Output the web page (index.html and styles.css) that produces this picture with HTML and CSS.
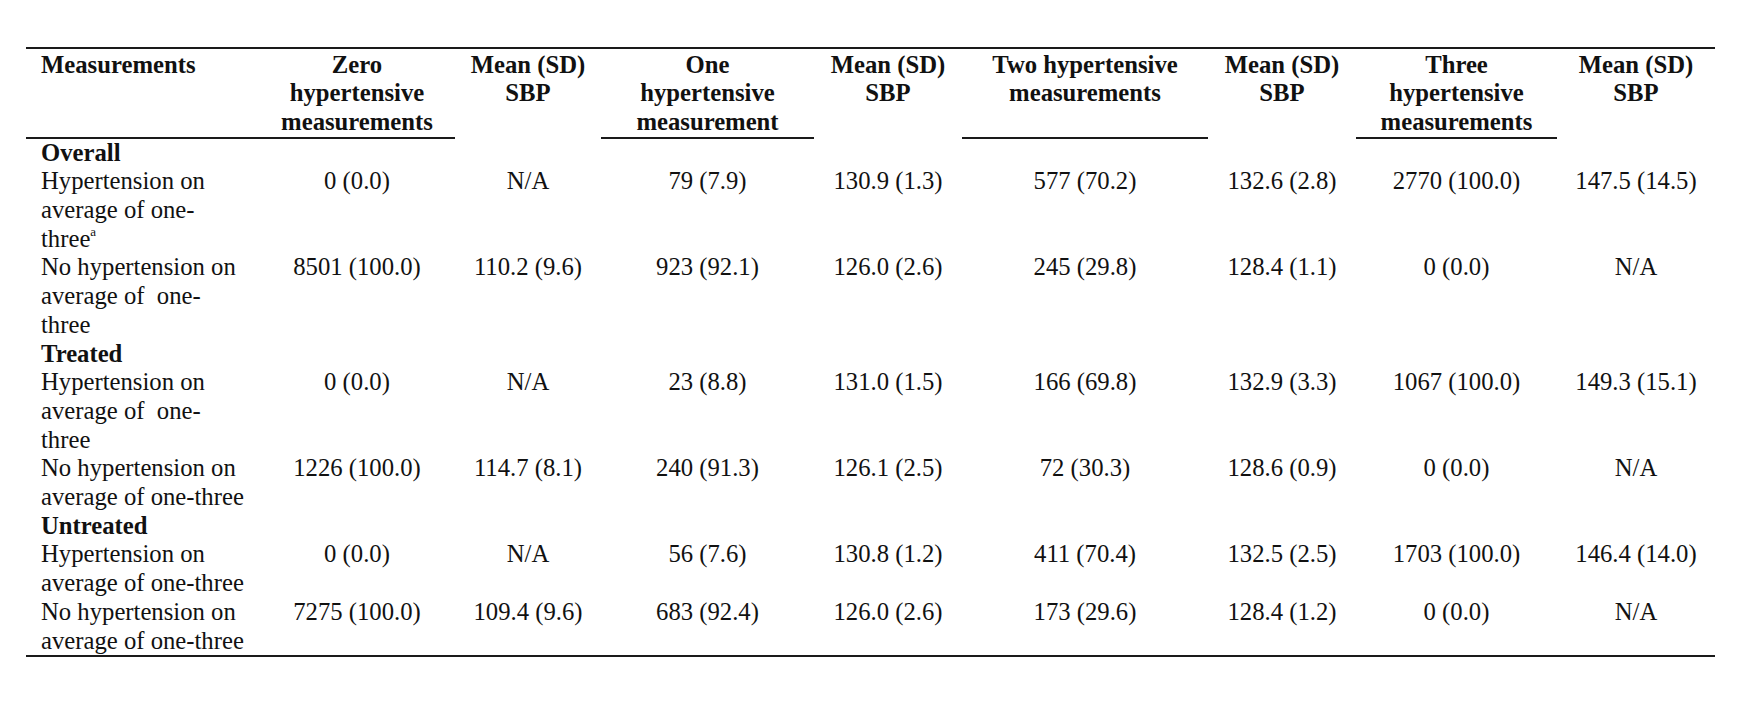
FILE: index.html
```html
<!DOCTYPE html>
<html lang="en">
<head>
<meta charset="utf-8">
<title>Hypertensive measurements</title>
<link rel="stylesheet" href="styles.css">
</head>
<body>
<table class="data">
  <colgroup>
    <col class="c-label">
    <col class="c-zero">
    <col class="c-mean1">
    <col class="c-one">
    <col class="c-mean2">
    <col class="c-two">
    <col class="c-mean3">
    <col class="c-three">
    <col class="c-mean4">
  </colgroup>
  <thead>
    <tr>
      <th class="h-label ul">Measurements</th>
      <th class="ul">Zero<br>hypertensive<br>measurements</th>
      <th>Mean (SD)<br>SBP</th>
      <th class="ul">One<br>hypertensive<br>measurement</th>
      <th>Mean (SD)<br>SBP</th>
      <th class="ul">Two hypertensive<br>measurements</th>
      <th>Mean (SD)<br>SBP</th>
      <th class="ul">Three<br>hypertensive<br>measurements</th>
      <th>Mean (SD)<br>SBP</th>
    </tr>
  </thead>
  <tbody>
    <tr class="section"><td colspan="9" class="label">Overall</td></tr>
    <tr>
      <td class="label">Hypertension on<br>average of one-<br>three<sup class="fn">a</sup></td>
      <td>0 (0.0)</td><td>N/A</td><td>79 (7.9)</td><td>130.9 (1.3)</td><td>577 (70.2)</td><td>132.6 (2.8)</td><td>2770 (100.0)</td><td>147.5 (14.5)</td>
    </tr>
    <tr>
      <td class="label">No hypertension on<br>average of&nbsp; one-<br>three</td>
      <td>8501 (100.0)</td><td>110.2 (9.6)</td><td>923 (92.1)</td><td>126.0 (2.6)</td><td>245 (29.8)</td><td>128.4 (1.1)</td><td>0 (0.0)</td><td>N/A</td>
    </tr>
    <tr class="section"><td colspan="9" class="label">Treated</td></tr>
    <tr>
      <td class="label">Hypertension on<br>average of&nbsp; one-<br>three</td>
      <td>0 (0.0)</td><td>N/A</td><td>23 (8.8)</td><td>131.0 (1.5)</td><td>166 (69.8)</td><td>132.9 (3.3)</td><td>1067 (100.0)</td><td>149.3 (15.1)</td>
    </tr>
    <tr>
      <td class="label">No hypertension on<br>average of one-three</td>
      <td>1226 (100.0)</td><td>114.7 (8.1)</td><td>240 (91.3)</td><td>126.1 (2.5)</td><td>72 (30.3)</td><td>128.6 (0.9)</td><td>0 (0.0)</td><td>N/A</td>
    </tr>
    <tr class="section"><td colspan="9" class="label">Untreated</td></tr>
    <tr>
      <td class="label">Hypertension on<br>average of one-three</td>
      <td>0 (0.0)</td><td>N/A</td><td>56 (7.6)</td><td>130.8 (1.2)</td><td>411 (70.4)</td><td>132.5 (2.5)</td><td>1703 (100.0)</td><td>146.4 (14.0)</td>
    </tr>
    <tr class="last">
      <td class="label">No hypertension on<br>average of one-three</td>
      <td>7275 (100.0)</td><td>109.4 (9.6)</td><td>683 (92.4)</td><td>126.0 (2.6)</td><td>173 (29.6)</td><td>128.4 (1.2)</td><td>0 (0.0)</td><td>N/A</td>
    </tr>
  </tbody>
</table>
</body>
</html>
```

FILE: styles.css
```css
html, body {
  margin: 0;
  padding: 0;
  background: #ffffff;
}

body {
  font-family: "Liberation Serif", "Times New Roman", serif;
  font-size: 24.7px;
  line-height: 28.7px;
  color: #111111;
}

.data {
  margin: 47px 0 0 26px;
  width: 1689px;
  table-layout: fixed;
  border-collapse: separate;
  border-spacing: 0;
}

.c-label { width: 233px; }
.c-zero { width: 196px; }
.c-mean1 { width: 146px; }
.c-one { width: 213px; }
.c-mean2 { width: 148px; }
.c-two { width: 246px; }
.c-mean3 { width: 148px; }
.c-three { width: 201px; }
.c-mean4 { width: 158px; }

.data th,
.data td {
  padding: 0;
  vertical-align: top;
  text-align: center;
  white-space: nowrap;
}

.data th {
  font-weight: bold;
  border-top: 2px solid #1a1a1a;
  padding-top: 1.5px;
}

.data th.ul {
  border-bottom: 2px solid #1a1a1a;
}

.data .h-label,
.data td.label {
  text-align: left;
  padding-left: 15px;
}

.section td {
  font-weight: bold;
}

.last td {
  border-bottom: 2px solid #1a1a1a;
}

.fn {
  font-size: 13px;
  line-height: 0;
  vertical-align: 11px;
}
```
